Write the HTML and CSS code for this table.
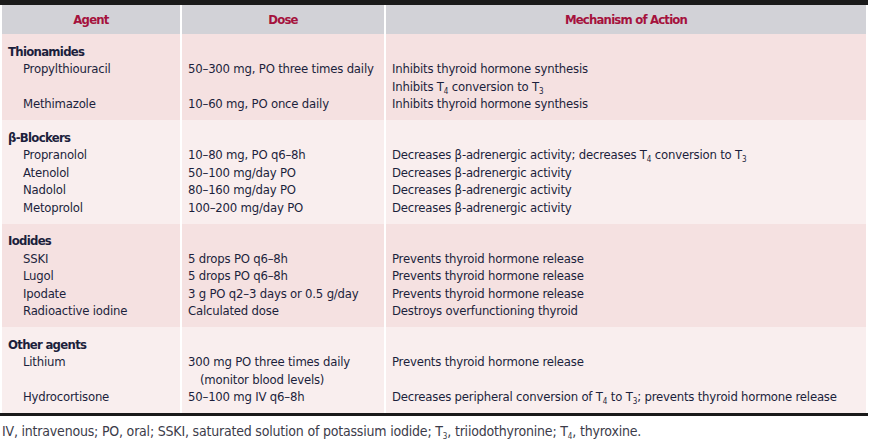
FILE: index.html
```html
<!DOCTYPE html>
<html>
<head>
<meta charset="utf-8">
<link rel="stylesheet" href="styles.css">
</head>
<body>
<div class="wrap">
<table class="drugs">
  <colgroup><col class="c1"><col class="c2"><col class="c3"></colgroup>
  <thead>
    <tr><th>Agent</th><th class="sep">Dose</th><th class="sep">Mechanism of Action</th></tr>
  </thead>
  <tbody class="g dark">
    <tr><td class="grp">Thionamides</td><td class="sep"></td><td class="sep"></td></tr>
    <tr><td class="drug">Propylthiouracil</td><td class="sep">50–300 mg, PO three times daily</td><td class="sep">Inhibits thyroid hormone synthesis<br>Inhibits T<sub>4</sub> conversion to T<sub>3</sub></td></tr>
    <tr><td class="drug">Methimazole</td><td class="sep">10–60 mg, PO once daily</td><td class="sep">Inhibits thyroid hormone synthesis</td></tr>
  </tbody>
  <tbody class="g light">
    <tr><td class="grp">β-Blockers</td><td class="sep"></td><td class="sep"></td></tr>
    <tr><td class="drug">Propranolol</td><td class="sep">10–80 mg, PO q6–8h</td><td class="sep">Decreases β-adrenergic activity; decreases T<sub>4</sub> conversion to T<sub>3</sub></td></tr>
    <tr><td class="drug">Atenolol</td><td class="sep">50–100 mg/day PO</td><td class="sep">Decreases β-adrenergic activity</td></tr>
    <tr><td class="drug">Nadolol</td><td class="sep">80–160 mg/day PO</td><td class="sep">Decreases β-adrenergic activity</td></tr>
    <tr><td class="drug">Metoprolol</td><td class="sep">100–200 mg/day PO</td><td class="sep">Decreases β-adrenergic activity</td></tr>
  </tbody>
  <tbody class="g dark">
    <tr><td class="grp">Iodides</td><td class="sep"></td><td class="sep"></td></tr>
    <tr><td class="drug">SSKI</td><td class="sep">5 drops PO q6–8h</td><td class="sep">Prevents thyroid hormone release</td></tr>
    <tr><td class="drug">Lugol</td><td class="sep">5 drops PO q6–8h</td><td class="sep">Prevents thyroid hormone release</td></tr>
    <tr><td class="drug">Ipodate</td><td class="sep">3 g PO q2–3 days or 0.5 g/day</td><td class="sep">Prevents thyroid hormone release</td></tr>
    <tr><td class="drug">Radioactive iodine</td><td class="sep">Calculated dose</td><td class="sep">Destroys overfunctioning thyroid</td></tr>
  </tbody>
  <tbody class="g light">
    <tr><td class="grp">Other agents</td><td class="sep"></td><td class="sep"></td></tr>
    <tr><td class="drug">Lithium</td><td class="sep">300 mg PO three times daily<br><span class="ind">(monitor blood levels)</span></td><td class="sep">Prevents thyroid hormone release</td></tr>
    <tr><td class="drug">Hydrocortisone</td><td class="sep">50–100 mg IV q6–8h</td><td class="sep">Decreases peripheral conversion of T<sub>4</sub> to T<sub>3</sub>; prevents thyroid hormone release</td></tr>
  </tbody>
</table>
</div>
<p class="note">IV, intravenous; PO, oral; SSKI, saturated solution of potassium iodide; T<sub>3</sub>, triiodothyronine; T<sub>4</sub>, thyroxine.</p>
</body>
</html>
```
FILE: styles.css
```css
html, body { margin: 0; padding: 0; background: #fff; }
body {
  font-family: "DejaVu Sans Condensed", "Liberation Sans", sans-serif;
  font-size: 13px;
  letter-spacing: -0.2px;
  color: #1c1f3c;
}
.wrap {
  width: 868px;
  border-top: 5px solid #1a1a1a;
  border-bottom: 3px solid #1a1a1a;
  box-sizing: border-box;
  padding: 0 2px;
}
.drugs {
  width: 864px;
  border-collapse: collapse;
  table-layout: fixed;
}
.c1 { width: 179px; }
.c2 { width: 204px; }
.c3 { width: 481px; }
th {
  background: #d2d2d7;
  color: #a5123d;
  font-weight: bold;
  font-size: 13px;
  letter-spacing: -0.8px;
  height: 29px;
  padding: 0;
  text-align: center;
  vertical-align: middle;
}
td {
  padding: 0 0 0 6px;
  line-height: 17.5px;
  vertical-align: top;
  white-space: nowrap;
}
.sep { border-left: 2px solid #fff; }
.dark { background: #f5e1e1; }
.light { background: #f9eeee; }
.g tr:first-child td { padding-top: 8.5px; }
.g tr:last-child td { padding-bottom: 7.5px; }
.grp { font-weight: bold; letter-spacing: -0.7px; }
.drug { padding-left: 21px; }
.ind { padding-left: 12px; }
sub { font-size: 8px; vertical-align: -3px; line-height: 0; letter-spacing: 0; }
.note {
  margin: 7px 0 0 2px;
  color: #3c3c4a;
  font-size: 14px;
  letter-spacing: -0.2px;
  line-height: 17px;
}
```
